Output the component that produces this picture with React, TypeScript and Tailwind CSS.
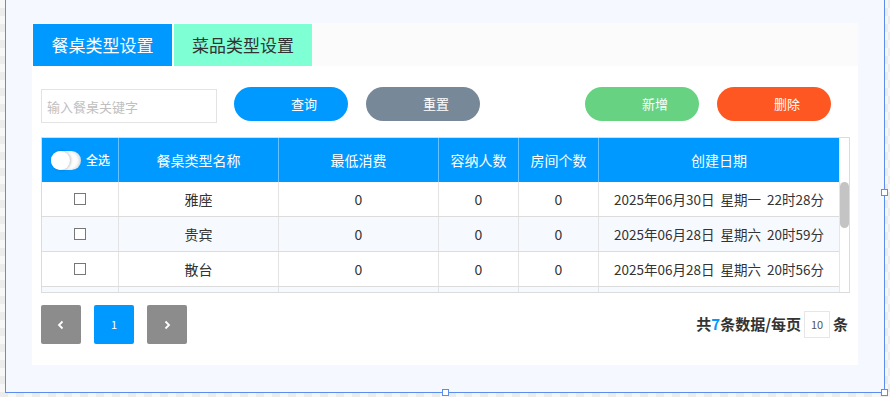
const ROWS = [
  { name: "雅座", min: 0, cap: 0, rooms: 0, date: "2025年06月30日  星期一  22时28分" },
  { name: "贵宾", min: 0, cap: 0, rooms: 0, date: "2025年06月28日  星期六  20时59分" },
  { name: "散台", min: 0, cap: 0, rooms: 0, date: "2025年06月28日  星期六  20时56分" },
  { name: "", min: "", cap: "", rooms: "", date: "" },
];

const COLS = ["w-[77px]", "w-[160px]", "w-[160px]", "w-[80px]", "w-[80px]", "w-[240px]"];

function Pill({ color, label }: { color: string; label: string }) {
  return (
    <button className={`h-[34px] w-[114px] rounded-full pl-[26px] text-[13px] text-white ${color}`}>
      {label}
    </button>
  );
}

function Handle({ className }: { className: string }) {
  return <span className={`absolute h-[7px] w-[7px] border border-[#5b8def] bg-white ${className}`} />;
}

export default function App() {
  return (
    <div
      className="h-[397px] w-[890px] overflow-hidden bg-[repeating-conic-gradient(#ececec_0_25%,#f7f7f7_0_50%)] bg-[length:16px_16px] text-[#333]"
      style={{ fontFamily: '"Noto Sans CJK SC", "Noto Sans", sans-serif' }}
    >
      <div className="relative ml-[5px] h-[393px] w-[880px] border-x border-b border-[#5b8def] bg-[#f5f9ff] pt-[23px]">
        <Handle className="-right-[4px] top-[189px]" />
        <Handle className="-bottom-[4px] left-[436px]" />
        <Handle className="-bottom-[4px] -right-[4px]" />

        {/* panel */}
        <div className="ml-[26px] h-[342px] w-[826px] bg-white">
          <div className="flex h-[43px] gap-[2px] bg-[#fbfbfb] pl-[1px] pt-[1px]">
            <div className="flex h-[42px] w-[139px] items-center justify-center bg-[#0099ff] text-[17px] text-white">
              餐桌类型设置
            </div>
            <div className="flex h-[42px] w-[138px] items-center justify-center bg-[#7fffd4] text-[17px] text-[#333]">
              菜品类型设置
            </div>
          </div>

          {/* toolbar */}
          <div className="mt-[21px] flex items-start justify-between pl-[9px] pr-[27px]">
            <div className="flex items-start gap-[17px]">
              <input
                placeholder="输入餐桌关键字"
                className="mt-[2px] h-[34px] w-[176px] border border-[#e3e3e3] px-[5px] text-[13px] outline-none placeholder:text-[#c0c0c0]"
              />
              <div className="flex gap-[18px]">
                <Pill color="bg-[#0099ff]" label="查询" />
                <Pill color="bg-[#778899]" label="重置" />
              </div>
            </div>
            <div className="flex gap-[18px]">
              <Pill color="bg-[#66d282]" label="新增" />
              <Pill color="bg-[#ff5722]" label="删除" />
            </div>
          </div>

          {/* table */}
          <div className="ml-[9px] mt-[14px] flex h-[156px] w-[809px] overflow-hidden border border-[#dcdcdc]">
            <div className="w-[797px]">
              <div className="flex h-[44px] bg-[#0099ff] text-[14px] text-white">
                <div className={`${COLS[0]} flex items-center gap-[5px] border-r border-[#66c2ff] pl-[9px]`}>
                  <span className="relative h-[19px] w-[30px] rounded-full bg-white shadow-[inset_-2px_0_3px_rgba(0,0,0,0.15)]">
                    <span className="absolute left-0 top-0 h-[19px] w-[19px] rounded-full bg-white shadow-[1px_0_3px_rgba(0,0,0,0.25)]" />
                  </span>
                  <span className="text-[12px] font-medium">全选</span>
                </div>
                {["餐桌类型名称", "最低消费", "容纳人数", "房间个数", "创建日期"].map((h, i) => (
                  <div
                    key={h}
                    className={`${COLS[i + 1]} flex items-center justify-center ${i < 4 ? "border-r border-[#66c2ff]" : ""}`}
                  >
                    {h}
                  </div>
                ))}
              </div>
              {ROWS.map((r, idx) => (
                <div
                  key={idx}
                  className={`flex h-[35px] border-b border-[#dcdcdc] text-[14px] ${idx % 2 === 1 ? "bg-[#f6f9fe]" : "bg-white"}`}
                >
                  <div className={`${COLS[0]} flex items-center justify-center border-r border-[#e3e3e3]`}>
                    {r.name && <span className="h-[12px] w-[12px] border border-[#777] bg-white" />}
                  </div>
                  <div className={`${COLS[1]} flex items-center justify-center border-r border-[#e3e3e3]`}>{r.name}</div>
                  <div className={`${COLS[2]} flex items-center justify-center border-r border-[#e3e3e3]`}>{r.min}</div>
                  <div className={`${COLS[3]} flex items-center justify-center border-r border-[#e3e3e3]`}>{r.cap}</div>
                  <div className={`${COLS[4]} flex items-center justify-center border-r border-[#e3e3e3]`}>{r.rooms}</div>
                  <div className={`${COLS[5]} flex items-center justify-center whitespace-pre text-[13.5px]`}>{r.date}</div>
                </div>
              ))}
            </div>
            {/* scrollbar */}
            <div className="w-[11px] border-l border-[#e6e6e6] bg-white pt-[44px]">
              <div className="mx-auto h-[46px] w-[9px] rounded-full bg-[#c4c4c4]" />
            </div>
          </div>

          {/* pagination */}
          <div className="mt-[12px] flex items-center justify-between pl-[9px] pr-[10px]">
            <div className="flex gap-[13px]">
              <button className="flex h-[39px] w-[40px] items-center justify-center rounded-[2px] bg-[#8c8c8c] text-white">
                <svg width="10" height="12" viewBox="0 0 10 12" fill="none" stroke="white" strokeWidth="1.8">
                  <path d="M6.5 2.5 3 6l3.5 3.5" />
                </svg>
              </button>
              <button className="flex h-[39px] w-[40px] items-center justify-center rounded-[2px] bg-[#0099ff] text-[11px] text-white">
                1
              </button>
              <button className="flex h-[39px] w-[40px] items-center justify-center rounded-[2px] bg-[#8c8c8c] text-white">
                <svg width="10" height="12" viewBox="0 0 10 12" fill="none" stroke="white" strokeWidth="1.8">
                  <path d="M3.5 2.5 7 6l-3.5 3.5" />
                </svg>
              </button>
            </div>
            <div className="flex items-center gap-[3px] text-[15px] font-bold text-[#333]">
              <span>
                共<span className="text-[#0099ff]">7</span>条数据/每页
              </span>
              <span className="flex h-[27px] w-[26px] items-center justify-center border border-[#e6e6e6] text-[11px] font-normal text-[#555]">
                10
              </span>
              <span>条</span>
            </div>
          </div>
        </div>
      </div>
    </div>
  );
}
